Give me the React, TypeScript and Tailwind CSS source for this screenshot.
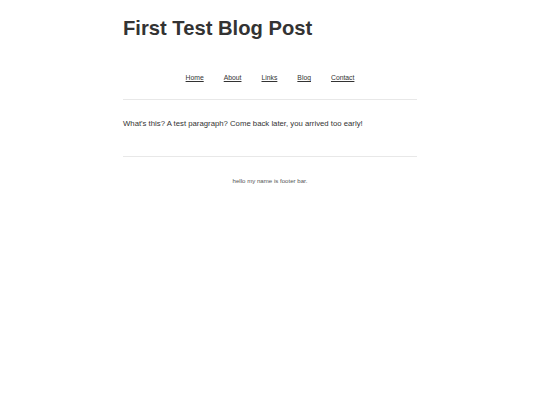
import React from "react";

export default function App() {
  const links = ["Home", "About", "Links", "Blog", "Contact"];
  return (
    <div className="min-h-[405px] w-full bg-white antialiased" style={{ fontFamily: '"Liberation Sans", Arial, sans-serif' }}>
      <div className="mx-auto w-[294px] pt-[16.6px]">
        <h1 className="text-[20.2px] font-bold leading-[23px] text-[#333333]">First Test Blog Post</h1>
        <nav className="mt-[34.5px] flex justify-center gap-[20px] text-[6.8px] leading-[8px]">
          {links.map((l) => (
            <a key={l} href="#" className="text-[#333333] underline">
              {l}
            </a>
          ))}
        </nav>
        <div className="mt-[16.9px] h-px bg-[#e8e8e8]" />
        <p className="mt-[18.8px] text-[7.75px] leading-[9px] text-[#333333]">
          What's this? A test paragraph? Come back later, you arrived too early!
        </p>
        <div className="mt-[28.2px] h-px bg-[#e8e8e8]" />
        <p className="mt-[20px] text-center text-[6.1px] leading-[7px] text-[#555555]">
          hello my name is footer bar.
        </p>
      </div>
    </div>
  );
}
